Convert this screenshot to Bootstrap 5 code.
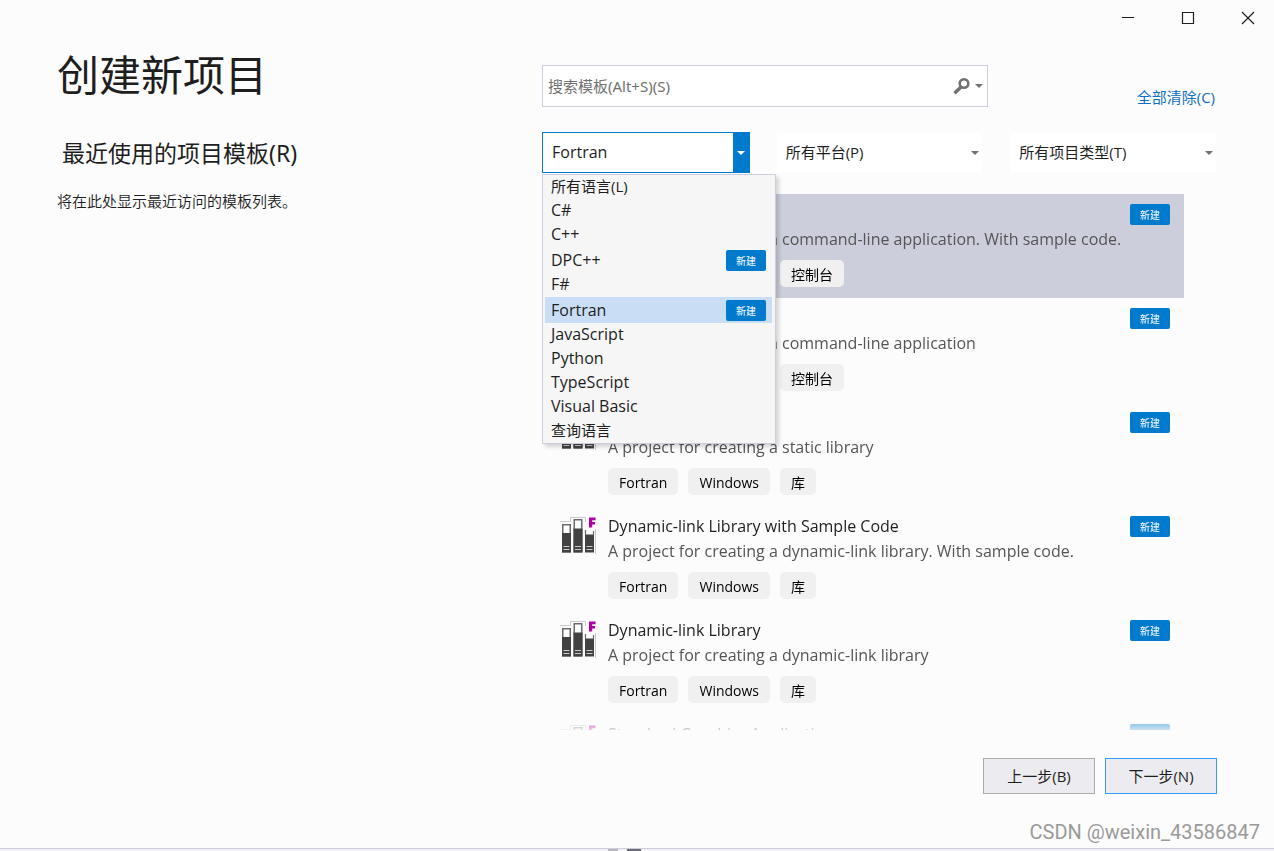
<!DOCTYPE html>
<html lang="zh-CN">
<head>
<meta charset="utf-8">
<meta name="viewport" content="width=device-width, initial-scale=1">
<title>创建新项目</title>
<link href="https://cdn.jsdelivr.net/npm/bootstrap@5.3.0/dist/css/bootstrap.min.css" rel="stylesheet">
<style>
  :root { --accent: #007acc; --line: #cccedb; --ink: #1e1e1e; --soft: #717171; }
  body {
    font-family: "Open Sans", "Noto Sans CJK SC", sans-serif;
    font-size: 15px; line-height: 24px; color: var(--ink); background: #fcfcfc;
  }
  .win-btn { width: 52px; height: 36px; color: var(--ink); }
  .dialog-grid { display: grid; grid-template-columns: 485fr 675fr; padding: 0 57px; }
  .page-title { font-size: 42px; line-height: 56px; font-weight: 400; margin: 11px 0 0; }
  .recent-title { font-family: "Noto Sans", "Noto Sans CJK SC", sans-serif; font-size: 23px; line-height: 32px; font-weight: 400; margin: 34px 0 0 5px; }
  .recent-note { font-weight: 350; margin: 20px 0 0; }
  .search-row { height: 71px; padding-top: 29px; }
  .search-box { width: 66%; height: 42px; border: 1px solid var(--line); background: #fff; }
  .search-box input { font-family: "Noto Sans", "Noto Sans CJK SC", sans-serif; border: 0; outline: 0; background: transparent; padding: 0 5px; color: var(--ink); }
  .search-box input::placeholder { color: var(--soft); opacity: 1; }
  .search-box button { color: var(--soft); }
  .clear-link { color: #0e70c0; text-decoration: none; margin: 20px 2px 0 0; }
  .filter-grid { display: grid; grid-template-columns: repeat(3, minmax(0, 1fr)); gap: 26px; margin-top: 25px; }
  .filter { height: 41px; }
  .filter select {
    width: 100%; height: 100%; appearance: none; border: 1px solid #fcfcfc; border-radius: 0;
    background: #fff; color: var(--ink); padding: 0 28px 2px 9px; outline: 0;
  }
  .filter.active-filter select { border-color: var(--accent); font-size: 16px; }
  .filter-arrow { width: 17px; color: var(--soft); pointer-events: none; }
  .active-filter .filter-arrow { background: var(--accent); color: #fff; }
  .lang-menu {
    top: 42px; left: 0; width: 234px; z-index: 10; padding: 0 3px 0 2px; font-size: 16px;
    background: #f6f6f6; border: 1px solid var(--line); box-shadow: 3px 3px 4px rgba(0, 0, 0, .16);
  }
  .lang-menu li { height: 24px; line-height: 22px; padding: 0 6px; }
  .lang-menu li.zh { font-size: 15px; }
  .lang-menu li.has-new { height: 26px; }
  .lang-menu li.chosen { background: #c9def5; }
  .new-tag {
    width: 40px; height: 21px; border-radius: 2px; background: var(--accent);
    color: #fff; font-size: 10px; line-height: 22px; text-align: center; flex: none;
  }
  .template-list {
    margin: 21px 33px 0 0;
    -webkit-mask-image: linear-gradient(#000 calc(100% - 24px), rgba(0, 0, 0, .2) 100%);
    mask-image: linear-gradient(#000 calc(100% - 24px), rgba(0, 0, 0, .2) 100%);
  }
  .template { height: 104px; padding: 10px 14px 0 18px; flex: none; }
  .template.chosen { background: #cccedb; }
  .template svg { width: 36px; height: 38px; margin-right: 12px; flex: none; }
  .template h3 { font-size: 16px; line-height: 21px; font-weight: 400; margin: 0; }
  .template p { color: #555; font-size: 16px; line-height: 25px; margin: 2px 0 8px; white-space: nowrap; }
  .chips { gap: 10px; }
  .chip { height: 27px; padding: 0 11px; border-radius: 5px; background: #f0f0f0; color: #000; font-size: 14px; line-height: 29px; }
  .footer-bar { padding: 28px 57px 0; gap: 10px; }
  .step-btn { width: 112px; height: 36px; border: 1px solid #acacac; background: #ececf0; color: var(--ink); padding: 0; }
  .step-btn.primary-step { border-color: #3399ff; }
  .watermark { font-family: Roboto, sans-serif; font-size: 20px; line-height: 24px; color: #9a9a9a; padding: 26px 14px 4px; }
  .strip { height: 3px; border-top: 1px solid var(--line); background: #f2f2f5; padding-left: 608px; gap: 9px; }
  .strip span { height: 2px; width: 10px; background: #b8b8bc; }
  .strip span + span { width: 14px; background: #6b6b78; }
</style>
</head>
<body>
<svg class="d-none" aria-hidden="true">
  <symbol id="library" viewBox="0 0 36 38">
    <path d="M0 5.500H10.500V1.500H25.500V6M35.500 13V37.500" fill="none" stroke="#cacaca"/>
    <g fill="#fff" stroke="#6a6a6a" stroke-width="1.500">
      <rect x="2.750" y="8.750" width="7.500" height="27"/>
      <rect x="14.250" y="3.750" width="7.500" height="32"/>
    </g>
    <path d="M2 17h9v19.500H2zM13.500 12.500h9v24h-9zM25 18.500h9v18h-9z" fill="#424242"/>
    <path d="M25.500 14v5M33.500 15v4" stroke="#6a6a6a" stroke-width="1.200"/>
    <path d="M3.500 30.500h6M3.500 33.500h6M15 30.500h6M15 33.500h6M26.500 30.500h6M26.500 33.500h6" stroke="#c9c9c9" stroke-width="1.200"/>
    <path d="M29 1.500h6.500v2.800h-3.300v1.600H35v2.600h-2.800v3H29z" fill="#b4009e"/>
  </symbol>
  <symbol id="caret" viewBox="0 0 8 4"><path d="M0 0h8L4 4z" fill="currentColor"/></symbol>
</svg>

<div class="d-flex flex-column vh-100 overflow-hidden">
  <header class="d-flex justify-content-end gap-2">
    <button class="btn p-0 border-0 win-btn" aria-label="最小化"><svg width="14" height="14" class="d-block mx-auto"><path d="M1 6.500h12" stroke="currentColor"/></svg></button>
    <button class="btn p-0 border-0 win-btn" aria-label="最大化"><svg width="14" height="14" class="d-block mx-auto"><path d="M1.500 1.500h11v11h-11z" fill="none" stroke="currentColor" stroke-width="1.200"/></svg></button>
    <button class="btn p-0 border-0 win-btn" aria-label="关闭"><svg width="14" height="14" class="d-block mx-auto"><path d="M1 1l12 12M13 1L1 13" stroke="currentColor" stroke-width="1.200"/></svg></button>
  </header>

  <main class="dialog-grid flex-fill overflow-hidden">
    <section>
      <h1 class="page-title">创建新项目</h1>
      <h2 class="recent-title">最近使用的项目模板(R)</h2>
      <p class="recent-note">将在此处显示最近访问的模板列表。</p>
    </section>

    <section class="d-flex flex-column overflow-hidden">
      <div class="search-row d-flex justify-content-between">
        <div class="search-box d-flex align-items-center">
          <input type="text" class="flex-fill" placeholder="搜索模板(Alt+S)(S)" aria-label="搜索模板">
          <button class="btn p-0 border-0 d-flex align-items-center me-1" aria-label="搜索">
            <svg width="18" height="18" class="me-1" viewBox="0 0 18 18"><circle cx="11" cy="6.500" r="4.300" fill="none" stroke="currentColor" stroke-width="2.600"/><path d="M8 10l-6.500 6.200" stroke="currentColor" stroke-width="3.400"/></svg>
            <svg width="8" height="4"><use href="#caret"/></svg>
          </button>
        </div>
        <a href="#" class="clear-link">全部清除(C)</a>
      </div>

      <div class="filter-grid">
        <div class="filter active-filter position-relative">
          <select aria-label="语言"><option>Fortran</option></select>
          <span class="filter-arrow position-absolute top-0 end-0 h-100 d-flex align-items-center justify-content-center"><svg width="8" height="4"><use href="#caret"/></svg></span>
          <ul class="lang-menu list-unstyled mb-0 position-absolute" role="listbox" aria-label="语言">
            <li role="option" class="zh">所有语言(L)</li>
            <li role="option">C#</li>
            <li role="option">C++</li>
            <li role="option" class="has-new d-flex align-items-center justify-content-between">DPC++<span class="new-tag">新建</span></li>
            <li role="option">F#</li>
            <li role="option" aria-selected="true" class="has-new chosen d-flex align-items-center justify-content-between">Fortran<span class="new-tag">新建</span></li>
            <li role="option">JavaScript</li>
            <li role="option">Python</li>
            <li role="option">TypeScript</li>
            <li role="option">Visual Basic</li>
            <li role="option" class="zh">查询语言</li>
          </ul>
        </div>
        <div class="filter position-relative">
          <select aria-label="平台"><option>所有平台(P)</option></select>
          <span class="filter-arrow position-absolute top-0 end-0 h-100 d-flex align-items-center justify-content-center"><svg width="8" height="4"><use href="#caret"/></svg></span>
        </div>
        <div class="filter position-relative">
          <select aria-label="项目类型"><option>所有项目类型(T)</option></select>
          <span class="filter-arrow position-absolute top-0 end-0 h-100 d-flex align-items-center justify-content-center"><svg width="8" height="4"><use href="#caret"/></svg></span>
        </div>
      </div>

      <div class="template-list d-flex flex-column flex-fill overflow-hidden">
        <article class="template chosen d-flex align-items-start">
          <svg><use href="#library"/></svg>
          <div class="flex-fill"><h3>Main Program Code</h3><p>A project for creating a command-line application. With sample code.</p>
            <div class="chips d-flex"><span class="chip">Fortran</span><span class="chip">Windows</span><span class="chip">控制台</span></div></div>
          <span class="new-tag">新建</span>
        </article>
        <article class="template d-flex align-items-start">
          <svg><use href="#library"/></svg>
          <div class="flex-fill"><h3>Empty Project</h3><p>A project for creating a command-line application</p>
            <div class="chips d-flex"><span class="chip">Fortran</span><span class="chip">Windows</span><span class="chip">控制台</span></div></div>
          <span class="new-tag">新建</span>
        </article>
        <article class="template d-flex align-items-start">
          <svg><use href="#library"/></svg>
          <div class="flex-fill"><h3>Static Library</h3><p>A project for creating a static library</p>
            <div class="chips d-flex"><span class="chip">Fortran</span><span class="chip">Windows</span><span class="chip">库</span></div></div>
          <span class="new-tag">新建</span>
        </article>
        <article class="template d-flex align-items-start">
          <svg><use href="#library"/></svg>
          <div class="flex-fill"><h3>Dynamic-link Library with Sample Code</h3><p>A project for creating a dynamic-link library. With sample code.</p>
            <div class="chips d-flex"><span class="chip">Fortran</span><span class="chip">Windows</span><span class="chip">库</span></div></div>
          <span class="new-tag">新建</span>
        </article>
        <article class="template d-flex align-items-start">
          <svg><use href="#library"/></svg>
          <div class="flex-fill"><h3>Dynamic-link Library</h3><p>A project for creating a dynamic-link library</p>
            <div class="chips d-flex"><span class="chip">Fortran</span><span class="chip">Windows</span><span class="chip">库</span></div></div>
          <span class="new-tag">新建</span>
        </article>
        <article class="template d-flex align-items-start">
          <svg><use href="#library"/></svg>
          <div class="flex-fill"><h3>Standard Graphics Application</h3></div>
          <span class="new-tag">新建</span>
        </article>
      </div>
    </section>
  </main>

  <div class="footer-bar d-flex justify-content-end">
    <button class="step-btn">上一步(B)</button>
    <button class="step-btn primary-step">下一步(N)</button>
  </div>
  <div class="watermark text-end">CSDN @weixin_43586847</div>
  <div class="strip d-flex"><span></span><span></span></div>
</div>
<script src="https://cdn.jsdelivr.net/npm/bootstrap@5.3.0/dist/js/bootstrap.bundle.min.js"></script>
</body>
</html>
